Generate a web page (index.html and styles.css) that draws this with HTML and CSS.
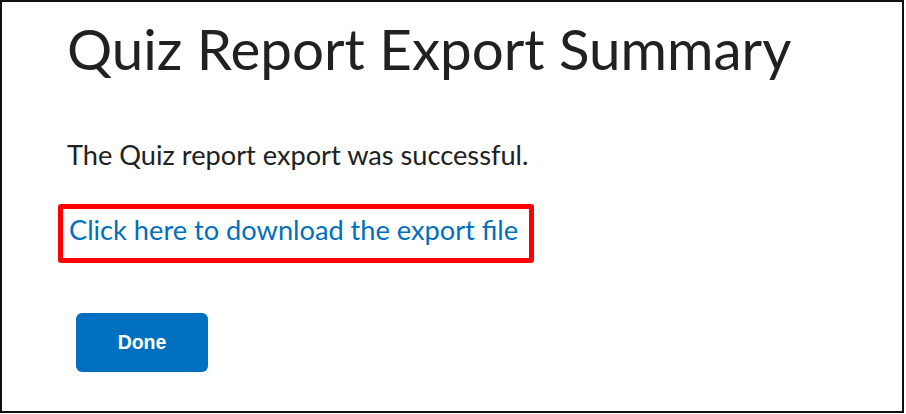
FILE: index.html
```html
<!DOCTYPE html>
<html lang="en">
<head>
  <meta charset="UTF-8">
  <meta name="viewport" content="width=device-width, initial-scale=1.0">
  <title>Quiz Report Export Summary</title>
  <link rel="stylesheet" href="styles.css">
</head>
<body>
  <div class="frame">
    <h1 class="page-title">Quiz Report Export Summary</h1>
    <p class="message">The Quiz report export was successful.</p>
    <div class="highlight">
      <a href="#" class="download-link">Click here to download the export file</a>
    </div>
    <button class="done-btn">Done</button>
  </div>
</body>
</html>
```

FILE: styles.css
```css
* {
  margin: 0;
  padding: 0;
  box-sizing: border-box;
}
body {
  font-family: Lato, 'Liberation Sans', Arial, sans-serif;
  background: #fff;
  color: #202122;
}
.frame {
  width: 904px;
  height: 413px;
  border: 2px solid #111;
  padding: 12px 0 0 65px;
  display: flex;
  flex-direction: column;
  align-items: flex-start;
}
.page-title {
  font-size: 56.5px;
  font-weight: 400;
  line-height: 68px;
  color: #202122;
}
.message {
  margin-top: 57px;
  font-size: 27.2px;
  line-height: 32px;
}
.highlight {
  margin-top: 33px;
  margin-left: -9px;
  border: 5px solid #f00;
  border-radius: 3px;
  padding: 5px 11px 12px 6px;
}
.download-link {
  font-size: 27.2px;
  line-height: 32px;
  color: #006fbf;
  text-decoration: none;
}
.done-btn {
  margin-top: 50px;
  margin-left: 9px;
  width: 132px;
  height: 59px;
  border: none;
  border-radius: 6px;
  background: #006fbf;
  color: #fff;
  font-family: 'Liberation Sans', Arial, sans-serif;
  font-weight: bold;
  font-size: 19.5px;
}
```
